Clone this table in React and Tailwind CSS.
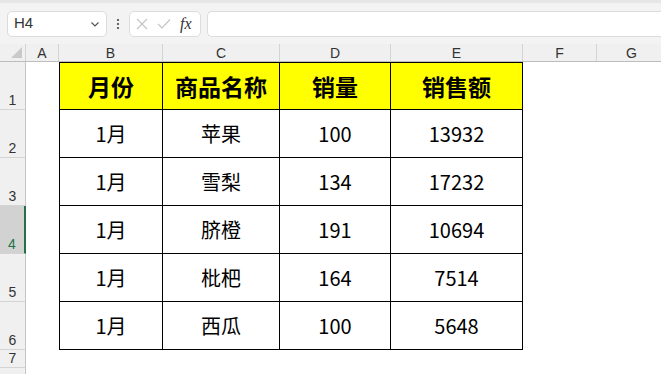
import React from "react";

const cols = [
  { key: "A", w: 33 },
  { key: "B", w: 104 },
  { key: "C", w: 117 },
  { key: "D", w: 111 },
  { key: "E", w: 132 },
  { key: "F", w: 74 },
  { key: "G", w: 70 },
];

const header = ["月份", "商品名称", "销量", "销售额"];
const data = [
  ["1月", "苹果", "100", "13932"],
  ["1月", "雪梨", "134", "17232"],
  ["1月", "脐橙", "191", "10694"],
  ["1月", "枇杷", "164", "7514"],
  ["1月", "西瓜", "100", "5648"],
];

const font = { fontFamily: '"Noto Sans CJK SC", "Noto Sans", sans-serif' };

function RowHead({ n, h, selected }) {
  return (
    <div
      className={
        "w-[26px] shrink-0 flex items-end justify-center pb-[1px] text-[14px] leading-[16px] border-b border-[#d4d4d4] " +
        (selected
          ? "bg-[#d2d2d2] text-[#217346] border-r-2 border-r-[#217346]"
          : "bg-[#f0f0f0] text-[#333] border-r border-r-[#c6c6c6]")
      }
      style={{ height: h }}
    >
      {n}
    </div>
  );
}

export default function App() {
  return (
    <div className="w-[661px] h-[374px] overflow-hidden bg-white flex flex-col" style={{ fontFamily: '"Liberation Sans", Arial, sans-serif' }}>
      {/* toolbar */}
      <div className="h-[44px] shrink-0 bg-[#f3f3f3] border-t-[3px] border-[#e6e6e6] flex items-center pl-[7px]">
        <div className="w-[100px] h-[26px] bg-white border border-[#dcdcdc] rounded-[5px] flex items-center justify-between pl-[6px] pr-[6px]">
          <span className="text-[15px] text-[#333]">H4</span>
          <svg width="10" height="10" viewBox="0 0 10 10"><path d="M1.5 3.5 L5 7 L8.5 3.5" stroke="#555" strokeWidth="1.2" fill="none" /></svg>
        </div>
        <div className="w-[22px] flex justify-center">
          <svg width="4" height="12" viewBox="0 0 4 12"><circle cx="2" cy="2" r="1.1" fill="#444" /><circle cx="2" cy="6" r="1.1" fill="#444" /><circle cx="2" cy="10" r="1.1" fill="#444" /></svg>
        </div>
        <div className="w-[72px] h-[26px] bg-white border border-[#dcdcdc] rounded-[5px] flex items-center pl-[6px] gap-[9px]">
          <svg width="12" height="12" viewBox="0 0 12 12"><path d="M1 1 L11 11 M11 1 L1 11" stroke="#c4c4c4" strokeWidth="1.1" /></svg>
          <svg width="14" height="12" viewBox="0 0 14 12"><path d="M1 6 L5 10 L13 1.5" stroke="#c4c4c4" strokeWidth="1.1" fill="none" /></svg>
          <span className="text-[16px] italic text-[#333]" style={{ fontFamily: '"Liberation Serif", "DejaVu Serif", serif' }}>fx</span>
        </div>
        <div className="ml-[6px] flex-1 h-[26px] bg-white border border-[#dcdcdc] rounded-l-[5px] border-r-0" />
      </div>

      {/* column header row */}
      <div className="h-[18px] shrink-0 flex bg-[#f0f0f0] border-b border-[#bdbdbd]">
        <div className="w-[26px] shrink-0 relative border-r border-[#d4d4d4]">
          <svg className="absolute right-[3px] bottom-[3px]" width="11" height="11" viewBox="0 0 11 11"><path d="M11 0 L11 11 L0 11 Z" fill="#c9c9c9" /></svg>
        </div>
        {cols.map((c) => (
          <div key={c.key} className="shrink-0 flex items-center justify-center text-[14px] text-[#333] border-r border-[#d4d4d4] leading-none" style={{ width: c.w }}>
            {c.key}
          </div>
        ))}
        <div className="flex-1" />
      </div>

      {/* body */}
      <div className="flex flex-1">
        <div className="flex flex-col">
          <RowHead n="1" h={48} />
          <RowHead n="2" h={48} />
          <RowHead n="3" h={48} />
          <RowHead n="4" h={48} selected />
          <RowHead n="5" h={48} />
          <RowHead n="6" h={48} />
          <RowHead n="7" h={18} />
          <RowHead n="" h={18} />
        </div>
        <div className="w-[33px] shrink-0" />
        <div className="flex flex-col" style={font}>
          <div className="flex h-[48px] bg-[#ffff00] border border-black">
            {header.map((t, i) => (
              <div
                key={t}
                className={"flex items-center justify-center text-[23px] font-bold text-black " + (i < 3 ? "border-r border-black" : "")}
                style={{ width: [103, 117, 111, 131][i] }}
              >
                {t}
              </div>
            ))}
          </div>
          {data.map((row, r) => (
            <div key={r} className="flex h-[48px] border-x border-b border-black">
              {row.map((t, i) => (
                <div
                  key={i}
                  className={"flex items-center justify-center text-[20px] text-black " + (i < 3 ? "border-r border-black" : "")}
                  style={{ width: [103, 117, 111, 131][i] }}
                >
                  {t}
                </div>
              ))}
            </div>
          ))}
        </div>
      </div>
    </div>
  );
}
